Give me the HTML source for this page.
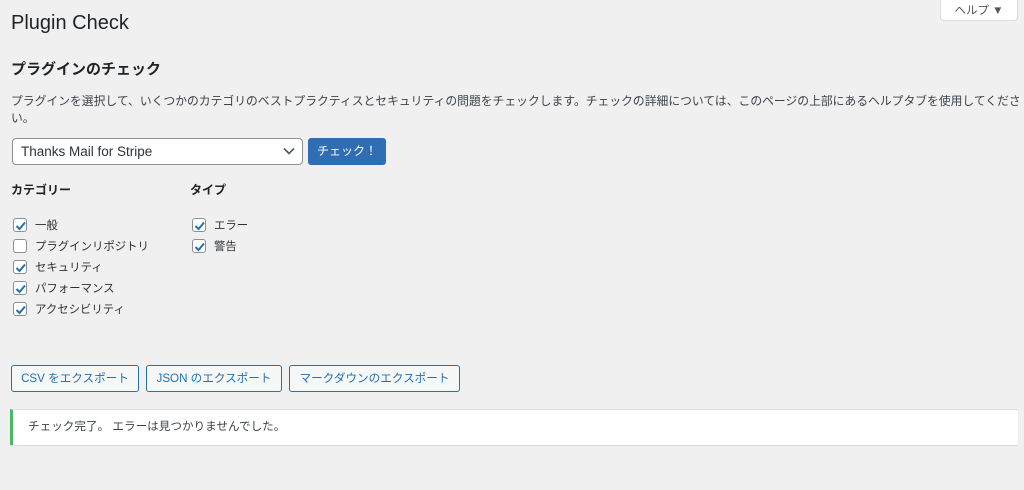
<!DOCTYPE html><html><head><meta charset="utf-8"><style>
*{box-sizing:border-box;margin:0;padding:0}
body{width:1024px;height:490px;background:#f0f0f1;font-family:"Liberation Sans","Noto Sans CJK JP",sans-serif;color:#1d2327;position:relative;overflow:hidden;font-size:13px}
.a{position:absolute;white-space:nowrap}
.cb{position:absolute;width:14px;height:14px;border:1px solid #8c8f94;border-radius:3px;background:#fff}
.cb svg{position:absolute;left:0;top:0}
.lbl{position:absolute;font-size:11.4px;color:#2c3338}
.btn{position:absolute;top:365px;height:27px;border:1px solid #2271b1;border-radius:3px;background:#f6f7f7;color:#2271b1;font-size:11.6px;text-align:center;line-height:25px}
</style></head><body>
<div class="a" style="left:940px;top:-3px;width:78px;height:24px;background:#fff;border:1px solid #dcdcde;border-radius:0 0 4px 4px;font-size:11.5px;color:#50575e;text-align:center;line-height:22px;padding-top:2px">ヘルプ ▼</div>
<div class="a" style="left:11px;top:12px;font-size:20px;color:#1d2327">Plugin Check</div>
<div class="a" style="left:11px;top:58px;font-size:15px;font-weight:bold">プラグインのチェック</div>
<div class="a" style="left:11px;top:93px;font-size:11.8px;color:#3c434a;line-height:17px;white-space:normal;width:1012px">プラグインを選択して、いくつかのカテゴリのベストプラクティスとセキュリティの問題をチェックします。チェックの詳細については、このページの上部にあるヘルプタブを使用してください。</div>
<div class="a" style="left:12px;top:138px;width:291px;height:27px;background:#fff;border:1px solid #8c8f94;border-radius:4px;font-size:13.5px;line-height:25px;padding-left:8px;color:#2c3338">Thanks Mail for Stripe
<svg style="position:absolute;right:7px;top:8px" width="12" height="8"><path d="M1 1.5L6 6.5L11 1.5" fill="none" stroke="#50575e" stroke-width="1.6"/></svg></div>
<div class="a" style="left:308px;top:138px;width:78px;height:27px;background:#2f6eb2;border-radius:3px;color:#fff;font-size:12px;text-align:center;line-height:27px">チェック！</div>
<div class="a" style="left:11px;top:181px;font-weight:bold;font-size:12px">カテゴリー</div>
<div class="a" style="left:190px;top:181px;font-weight:bold;font-size:12px">タイプ</div>
<div id="c"></div>
<div class="btn" style="left:11px;width:128px">CSV をエクスポート</div>
<div class="btn" style="left:146px;width:136px">JSON のエクスポート</div>
<div class="btn" style="left:289px;width:171px">マークダウンのエクスポート</div>
<div class="a" style="left:10px;top:409px;width:1008px;height:36px;background:#fff;border-left:3px solid #4ab866;box-shadow:0 1px 1px rgba(0,0,0,.1);border-top:1px solid #dcdcde;font-size:11.6px;line-height:34px;padding-left:15px;color:#3c434a">チェック完了。 エラーは見つかりませんでした。</div>
<script>
var chk='<svg width="14" height="14"><path d="M2.5 7L5.5 10L11 3.5" fill="none" stroke="#2271b1" stroke-width="2"/></svg>';
var items=[[13,218,'一般',1],[13,239,'プラグインリポジトリ',0],[13,260,'セキュリティ',1],[13,281,'パフォーマンス',1],[13,302,'アクセシビリティ',1],[192,218,'エラー',1],[192,239,'警告',1]];
var h='';items.forEach(function(i){h+='<div class="cb" style="left:'+i[0]+'px;top:'+i[1]+'px">'+(i[3]?chk:'')+'</div><div class="lbl" style="left:'+(i[0]+22)+'px;top:'+(i[1]-1)+'px">'+i[2]+'</div>';});
document.getElementById('c').innerHTML=h;
</script>
</body></html>
